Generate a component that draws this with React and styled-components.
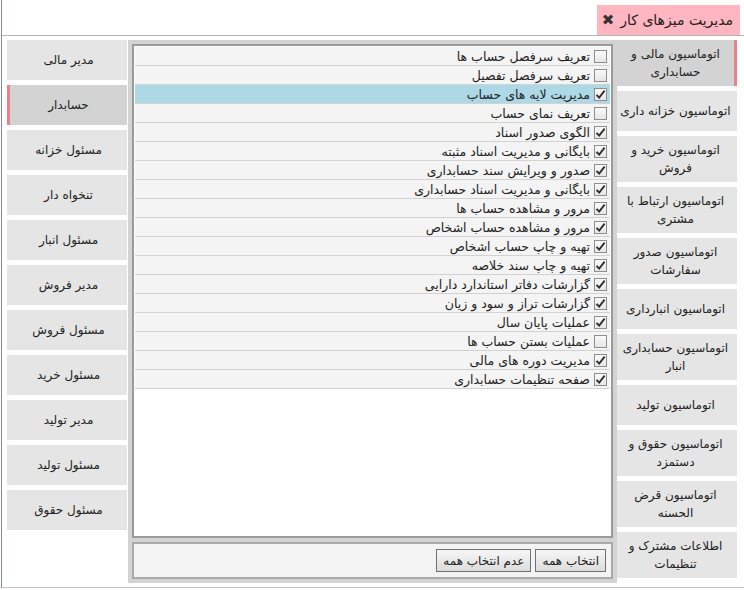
import React from 'react'
import styled, { createGlobalStyle } from 'styled-components'

const GlobalStyle = createGlobalStyle`
  html, body {
    margin: 0;
    padding: 0;
    background: #fff;
  }
  body {
    font-family: "DejaVu Sans", Tahoma, sans-serif;
    font-size: 12px;
    color: #222;
  }
`

// line breaks follow the original tab wrapping
const modules = [
  { title: 'اتوماسیون مالی و\nحسابداری', active: true },
  { title: 'اتوماسیون خزانه داری' },
  { title: 'اتوماسیون خرید و\nفروش' },
  { title: 'اتوماسیون ارتباط با\nمشتری' },
  { title: 'اتوماسیون صدور\nسفارشات' },
  { title: 'اتوماسیون انبارداری' },
  { title: 'اتوماسیون حسابداری\nانبار' },
  { title: 'اتوماسیون تولید' },
  { title: 'اتوماسیون حقوق و\nدستمزد' },
  { title: 'اتوماسیون قرض\nالحسنه' },
  { title: 'اطلاعات مشترک و\nتنظیمات' },
]

const roles = [
  { title: 'مدیر مالی' },
  { title: 'حسابدار', active: true },
  { title: 'مسئول خزانه' },
  { title: 'تنخواه دار' },
  { title: 'مسئول انبار' },
  { title: 'مدیر فروش' },
  { title: 'مسئول فروش' },
  { title: 'مسئول خرید' },
  { title: 'مدیر تولید' },
  { title: 'مسئول تولید' },
  { title: 'مسئول حقوق' },
]

const permissions = [
  { title: 'تعریف سرفصل حساب ها', checked: false },
  { title: 'تعریف سرفصل تفصیل', checked: false },
  { title: 'مدیریت لایه های حساب', checked: true, selected: true },
  { title: 'تعریف نمای حساب', checked: false },
  { title: 'الگوی صدور اسناد', checked: true },
  { title: 'بایگانی و مدیریت اسناد مثبته', checked: true },
  { title: 'صدور و ویرایش سند حسابداری', checked: true },
  { title: 'بایگانی و مدیریت اسناد حسابداری', checked: true },
  { title: 'مرور و مشاهده حساب ها', checked: true },
  { title: 'مرور و مشاهده حساب اشخاص', checked: true },
  { title: 'تهیه و چاپ حساب اشخاص', checked: true },
  { title: 'تهیه و چاپ سند خلاصه', checked: true },
  { title: 'گزارشات دفاتر استاندارد دارایی', checked: true },
  { title: 'گزارشات تراز و سود و زیان', checked: true },
  { title: 'عملیات پایان سال', checked: true },
  { title: 'عملیات بستن حساب ها', checked: false },
  { title: 'مدیریت دوره های مالی', checked: true },
  { title: 'صفحه تنظیمات حسابداری', checked: true },
]

function Checkbox({ checked }) {
  return (
    <Box>
      {checked && (
        <svg width="11" height="11" viewBox="0 0 11 11">
          <path d="M1.5 5.8 L4.2 8.6 L9.6 1.6" fill="none" stroke="#2b2b2b" strokeWidth="1.8" />
        </svg>
      )}
    </Box>
  )
}

function App() {
  return (
    <>
      <GlobalStyle />
      <Page dir="rtl">
        <Header>
          <TitleBox>
            <span>مدیریت میزهای کار</span>
            <Close>✖</Close>
          </TitleBox>
        </Header>
        <Body>
          <SideColumn>
            {modules.map((m) => (
              <ModuleTab key={m.title} $active={m.active}>
                {m.title}
              </ModuleTab>
            ))}
          </SideColumn>

          <Panel>
            <ListBox>
              {permissions.map((p) => (
                <Row key={p.title} $selected={p.selected}>
                  <Checkbox checked={p.checked} />
                  <span>{p.title}</span>
                </Row>
              ))}
            </ListBox>
            <Toolbar>
              <Button>انتخاب همه</Button>
              <Button>عدم انتخاب همه</Button>
            </Toolbar>
          </Panel>

          <RoleColumn>
            {roles.map((r) => (
              <RoleTab key={r.title} $active={r.active}>
                {r.title}
              </RoleTab>
            ))}
          </RoleColumn>
        </Body>
      </Page>
    </>
  )
}

const Page = styled.div`
  margin-left: 1px;
  border-left: 1px solid #7d8ca3;
  width: 743px;
  box-sizing: border-box;
  display: flex;
  flex-direction: column;
`

const Header = styled.div`
  height: 36px;
  box-sizing: border-box;
  border-bottom: 1px solid #b4b4b4;
  display: flex;
  align-items: flex-end;
  padding-right: 4px;
`

const TitleBox = styled.div`
  width: 143px;
  height: 30px;
  box-sizing: border-box;
  background: #ffb6c1;
  display: flex;
  align-items: center;
  gap: 6px;
  padding-right: 7px;
  font-size: 14px;
  color: #222;
  white-space: nowrap;
`

const Close = styled.span`
  font-size: 15px;
  color: #333;
  line-height: 1;
`

const Body = styled.div`
  height: 552px;
  box-sizing: border-box;
  border-bottom: 1px solid #c4c4c4;
  display: flex;
  padding: 4px 7px 4px 5px;
`

const SideColumn = styled.div`
  width: 120px;
  flex-shrink: 0;
  display: flex;
  flex-direction: column;
  gap: 5px;
`

const ModuleTab = styled.div`
  min-height: 40px;
  box-sizing: border-box;
  padding: 5px 2px;
  display: flex;
  align-items: center;
  justify-content: center;
  text-align: center;
  white-space: pre-line;
  line-height: 18px;
  background: ${(p) => (p.$active ? '#d3d3d3' : '#e5e5e5')};
  border-right: 3px solid ${(p) => (p.$active ? '#ee7f86' : 'transparent')};
  color: #222;
`

const Panel = styled.div`
  flex: 1;
  background: #d3d3d3;
  padding: 4px;
  display: flex;
  flex-direction: column;
  gap: 4px;
`

const ListBox = styled.div`
  flex: 1;
  background: #fff;
  border: 2px solid #9a9a9a;
  padding: 1px;
  display: flex;
  flex-direction: column;
`

const Row = styled.div`
  height: 19px;
  box-sizing: border-box;
  border-bottom: 1px solid #d2d2d2;
  background: ${(p) => (p.$selected ? '#add8e6' : '#f4f4f4')};
  display: flex;
  align-items: center;
  gap: 4px;
  padding-right: 3px;
  font-size: 12.5px;
  white-space: nowrap;
`

const Box = styled.span`
  width: 13px;
  height: 13px;
  box-sizing: border-box;
  border: 1px solid #8e8e8e;
  background: linear-gradient(#fafafa, #e6e6e6);
  display: flex;
  align-items: center;
  justify-content: center;
  flex-shrink: 0;
`

const Toolbar = styled.div`
  height: 37px;
  box-sizing: border-box;
  background: #f3f3f3;
  border: 2px solid #aaa;
  display: flex;
  align-items: center;
  gap: 4px;
  padding: 0 5px;
`

const Button = styled.button`
  height: 23px;
  padding: 0 6px;
  font-family: inherit;
  font-size: 12px;
  color: #222;
  border: 1px solid #707070;
  background: linear-gradient(#f7f7f7, #dcdcdc);
  border-radius: 0;
`

const RoleColumn = styled.div`
  width: 120px;
  flex-shrink: 0;
  margin-right: 1px;
  display: flex;
  flex-direction: column;
  gap: 5px;
`

const RoleTab = styled.div`
  height: 40px;
  box-sizing: border-box;
  display: flex;
  align-items: center;
  justify-content: center;
  background: ${(p) => (p.$active ? '#d3d3d3' : '#e5e5e5')};
  border-left: 3px solid ${(p) => (p.$active ? '#ee7f86' : 'transparent')};
  color: #222;
`

export default App
